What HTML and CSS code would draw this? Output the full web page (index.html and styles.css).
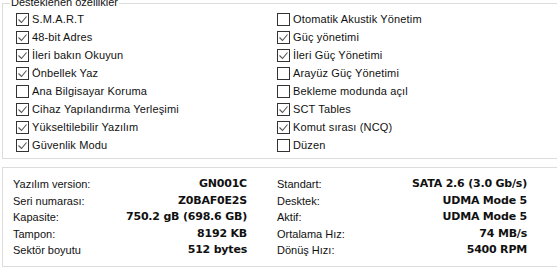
FILE: index.html
```html
<!DOCTYPE html>
<html lang="tr">
<head>
<meta charset="UTF-8">
<title>Disk bilgisi</title>
<link rel="stylesheet" href="styles.css">
</head>
<body>
  <div class="group">
    <span class="group-title">Desteklenen özellikler</span>
    <div class="features">
      <label class="item"><span class="box on"></span>S.M.A.R.T</label>
      <label class="item"><span class="box"></span>Otomatik Akustik Yönetim</label>
      <label class="item"><span class="box on"></span>48-bit Adres</label>
      <label class="item"><span class="box on"></span>Güç yönetimi</label>
      <label class="item"><span class="box on"></span>İleri bakın Okuyun</label>
      <label class="item"><span class="box on"></span>İleri Güç Yönetimi</label>
      <label class="item"><span class="box on"></span>Önbellek Yaz</label>
      <label class="item"><span class="box"></span>Arayüz Güç Yönetimi</label>
      <label class="item"><span class="box"></span>Ana Bilgisayar Koruma</label>
      <label class="item"><span class="box"></span>Bekleme modunda açıl</label>
      <label class="item"><span class="box on"></span>Cihaz Yapılandırma Yerleşimi</label>
      <label class="item"><span class="box on"></span>SCT Tables</label>
      <label class="item"><span class="box on"></span>Yükseltilebilir Yazılım</label>
      <label class="item"><span class="box on"></span>Komut sırası (NCQ)</label>
      <label class="item"><span class="box on"></span>Güvenlik Modu</label>
      <label class="item"><span class="box"></span>Düzen</label>
    </div>
  </div>

  <div class="details">
    <div class="detail-col left">
      <div class="row"><span>Yazılım version:</span><b>GN001C</b></div>
      <div class="row"><span>Seri numarası:</span><b>Z0BAF0E2S</b></div>
      <div class="row"><span>Kapasite:</span><b>750.2 gB (698.6 GB)</b></div>
      <div class="row"><span>Tampon:</span><b>8192 KB</b></div>
      <div class="row"><span>Sektör boyutu</span><b>512 bytes</b></div>
    </div>
    <div class="detail-col right">
      <div class="row"><span>Standart:</span><b>SATA 2.6 (3.0 Gb/s)</b></div>
      <div class="row"><span>Desktek:</span><b>UDMA Mode 5</b></div>
      <div class="row"><span>Aktif:</span><b>UDMA Mode 5</b></div>
      <div class="row"><span>Ortalama Hız:</span><b>74 MB/s</b></div>
      <div class="row"><span>Dönüş Hızı:</span><b>5400 RPM</b></div>
    </div>
  </div>
</body>
</html>
```

FILE: styles.css
```css
body {
  margin: 0;
  padding: 0;
  background-color: #fff;
  color: #111;
  font-family: "Liberation Sans", Arial, sans-serif;
  font-size: 11px;
  overflow: hidden;
}

/* group box with the feature checkboxes */
.group {
  margin: 3px 0 0 2px;
  height: 154px;
  border: 1px solid #dcdcdc;
  border-right: none;
}
.group-title {
  display: inline-block;
  margin: -8px 0 0 7px;
  padding: 0 1px;
  line-height: 13px;
  background-color: #fff;
  vertical-align: top;
}
.features {
  display: grid;
  grid-template-columns: 261px 1fr;
  grid-auto-rows: 18px;
  padding-left: 13px;
  margin-top: -6px;
}
.item {
  display: flex;
  align-items: center;
  gap: 3px;
  white-space: nowrap;
  letter-spacing: 0.15px;
}
.box {
  width: 11px;
  height: 11px;
  border: 1px solid #333;
  background-color: #fff;
  flex-shrink: 0;
}
.box.on {
  background: #fff url("data:image/svg+xml;utf8,<svg xmlns='http://www.w3.org/2000/svg' width='11' height='11'><path d='M1.5 5.5 L4.5 8.5 L9.5 2.5' fill='none' stroke='%23555' stroke-width='1.1'/></svg>") no-repeat center;
}

/* drive details panel */
.details {
  margin: 8px 0 0 2px;
  border: 1px solid #dcdcdc;
  border-right: none;
  padding: 8px 0 0 10px;
  box-sizing: border-box;
  height: 100px;
  display: flex;
  gap: 30px;
}
.detail-col.left {
  width: 234px;
}
.detail-col.right {
  width: 250px;
}
.row {
  display: flex;
  justify-content: space-between;
  height: 16.5px;
  line-height: 16px;
}
.row b {
  font-family: "DejaVu Sans", Verdana, sans-serif;
  font-size: 11px;
  letter-spacing: -0.2px;
}
```
